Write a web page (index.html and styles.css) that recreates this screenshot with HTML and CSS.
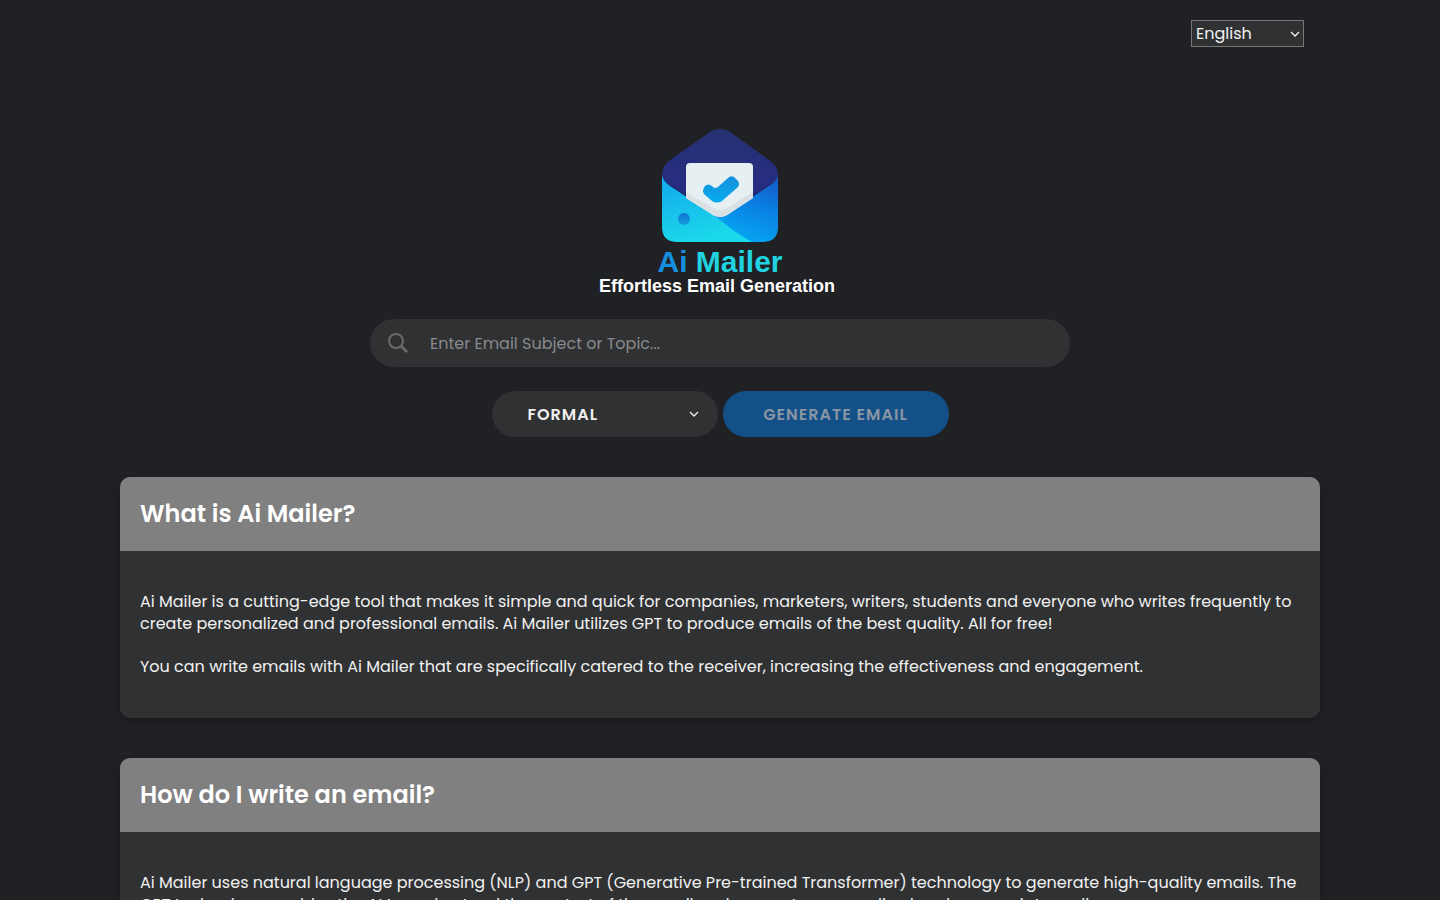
FILE: index.html
```
<!DOCTYPE html>
<html lang="en">
<head>
  <meta charset="UTF-8">
  <meta name="viewport" content="width=device-width, initial-scale=1.0">
  <title>Ai Mailer - Effortless Email Generation</title>
  <link rel="stylesheet" href="styles.css">
</head>
<body>
  <!-- Language -->
  <header class="top-bar">
    <select class="language-select" aria-label="Language">
      <option>English</option>
      <option>Español</option>
      <option>Français</option>
      <option>Deutsch</option>
    </select>
  </header>

  <main>
    <!-- Logo and form -->
    <section class="hero">
      <div class="logo">
        <svg class="logo-img" viewBox="0 0 160 130" aria-hidden="true">
          <defs>
            <linearGradient id="back" x1="0" y1="0" x2="0" y2="1">
              <stop offset="0" stop-color="#253272"/>
              <stop offset="1" stop-color="#28298a"/>
            </linearGradient>
            <linearGradient id="left" x1="0" y1="0" x2="0.3" y2="1">
              <stop offset="0" stop-color="#12a6ec"/>
              <stop offset="1" stop-color="#1bd8ea"/>
            </linearGradient>
            <linearGradient id="right" x1="1" y1="0" x2="0.6" y2="1">
              <stop offset="0" stop-color="#1555c4"/>
              <stop offset="0.5" stop-color="#0a80e2"/>
              <stop offset="1" stop-color="#06a5f2"/>
            </linearGradient>
            <linearGradient id="check" x1="0" y1="0" x2="0" y2="1">
              <stop offset="0" stop-color="#158fdd"/>
              <stop offset="1" stop-color="#08aced"/>
            </linearGradient>
            <linearGradient id="dot" x1="0" y1="0" x2="0" y2="1">
              <stop offset="0" stop-color="#1173ce"/>
              <stop offset="1" stop-color="#159fe0"/>
            </linearGradient>
          </defs>
          <path fill="url(#back)" d="M22 55Q22 46 30 40L70 12Q80 6 90 12L129 40Q138 46 138 55V76L86 97H74L22 76Z"/>
          <path fill="#1f2869" d="M22 55Q24 61 31 65L46 74V82L22 70ZM138 55Q136 61 129 65L113 74V82L138 70Z"/>
          <path fill="url(#right)" d="M138 55Q137 61 129 66L86 95L70 98L110 122H124Q138 121 138 107Z"/>
          <path fill="url(#left)" d="M22 55Q23 61 30 66L74 95Q95 113 112 122H36Q22 121 22 107Z"/>
          <path fill="#e6eff1" d="M46 47Q46 43 50 43H109Q113 43 113 47V78L87 95Q80 99 73 95L46 78Z"/>
          <path fill="#d9e1e5" d="M46 72L73 88Q80 92 87 88L113 72V78L87 95Q80 99 73 95L46 78Z"/>
          <path fill="url(#check)" d="M65 66Q68 63 72 66Q75 70 79 66L88 58Q91 55 94 57L98 61Q100 64 98 67L82 81Q77 84 72 81L65 75Q61 71 65 66Z"/>
          <circle cx="44" cy="99" r="6" fill="url(#dot)"/>
        </svg>
        <h1 class="logo-name"><span class="logo-ai">Ai</span> Mailer</h1>
        <p class="logo-tagline">Effortless Email Generation</p>
      </div>

      <form class="email-form">
        <div class="search-box">
          <svg class="search-icon" viewBox="0 0 20 20" aria-hidden="true">
            <circle cx="8" cy="8" r="7" fill="none" stroke="currentColor" stroke-width="2"/>
            <path d="M12.500 12.500L19 19" fill="none" stroke="currentColor" stroke-width="3"/>
          </svg>
          <input class="search-input" type="text" placeholder="Enter Email Subject or Topic..." aria-label="Email subject or topic">
        </div>
        <div class="form-actions">
          <select class="tone-select" aria-label="Tone">
            <option>FORMAL</option>
            <option>CASUAL</option>
            <option>FRIENDLY</option>
          </select>
          <button class="generate-btn" type="submit" disabled>GENERATE EMAIL</button>
        </div>
      </form>
    </section>

    <!-- Info cards -->
    <section class="cards">
      <article class="card">
        <h2 class="card-title">What is Ai Mailer?</h2>
        <div class="card-body">
          <p>Ai Mailer is a cutting-edge tool that makes it simple and quick for companies, marketers, writers, students and everyone who writes frequently to create personalized and professional emails. Ai Mailer utilizes GPT to produce emails of the best quality. All for free!</p>
          <p>You can write emails with Ai Mailer that are specifically catered to the receiver, increasing the effectiveness and engagement.</p>
        </div>
      </article>
      <article class="card">
        <h2 class="card-title">How do I write an email?</h2>
        <div class="card-body">
          <p>Ai Mailer uses natural language processing (NLP) and GPT (Generative Pre-trained Transformer) technology to generate high-quality emails. The GPT technology enables the AI to understand the context of the email and generate personalized and appropriate replies.</p>
        </div>
      </article>
    </section>
  </main>
</body>
</html>
```
FILE: styles.css
```
* {
  box-sizing: border-box;
}

body {
  margin: 0;
  background-color: #202124;
  color: #f1f1f1;
  font-family: "Poppins", "Inter", sans-serif;
  font-size: 16px;
  line-height: 1.4;
}

select,
input,
button {
  font-family: inherit;
  font-size: 16px;
}

select {
  appearance: none;
  background-color: #303133;
  background-image: url("data:image/svg+xml,%3Csvg xmlns='http://www.w3.org/2000/svg' width='10' height='6' viewBox='0 0 10 6'%3E%3Cpath d='M1 1l4 4 4-4' fill='none' stroke='%23f1f1f1' stroke-width='1.3'/%3E%3C/svg%3E");
  background-repeat: no-repeat;
  color: #f1f1f1;
}

/* Language */
.top-bar {
  display: flex;
  justify-content: flex-end;
  max-width: 1168px;
  margin: 0 auto;
  padding-top: 20px;
}

.language-select {
  width: 113px;
  height: 27px;
  padding: 0 4px;
  background-position: right 3px center;
  border: 1px solid #767676;
}

/* Logo */
.hero {
  display: flex;
  flex-direction: column;
  align-items: center;
  padding: 73px 20px 40px;
}

.logo {
  display: flex;
  flex-direction: column;
  align-items: center;
  margin-bottom: 20px;
  font-family: "Liberation Sans", Arial, sans-serif;
}

.logo-img {
  width: 160px;
  height: 130px;
}

.logo-name {
  margin: 0;
  font-size: 30px;
  line-height: 24px;
  color: #1fd3e0;
}

.logo-ai {
  color: #158fdd;
}

.logo-tagline {
  margin: 0;
  padding-right: 6px;
  font-size: 18px;
  font-weight: bold;
  color: #ffffff;
}

/* Form */
.email-form {
  width: 100%;
  max-width: 700px;
}

.search-box {
  display: flex;
  align-items: center;
  height: 48px;
  padding: 0 18px;
  gap: 22px;
  background-color: #303133;
  border-radius: 24px;
}

.search-icon {
  width: 20px;
  height: 20px;
  color: #68696b;
}

.search-input {
  flex: 1;
  padding: 0;
  background: none;
  border: none;
  outline: none;
  color: #f1f1f1;
}

.search-input::placeholder {
  color: #88898c;
}

.form-actions {
  display: flex;
  justify-content: center;
  gap: 5px;
  margin-top: 24px;
}

.tone-select,
.generate-btn {
  width: 226px;
  height: 46px;
  border: none;
  border-radius: 23px;
  font-weight: 600;
  letter-spacing: 1px;
}

.tone-select {
  padding: 0 36px;
  background-position: right 19px center;
}

.generate-btn {
  background-color: #135087;
  color: #8a96a3;
}

/* Cards */
.cards {
  max-width: 1200px;
  margin: 0 auto;
}

.card {
  margin-bottom: 40px;
  background-color: #303133;
  border-radius: 10px;
  box-shadow: 0 4px 8px rgba(0, 0, 0, 0.2);
  overflow: hidden;
}

.card-title {
  margin: 0;
  padding: 20px;
  background-color: #808080;
  color: #ffffff;
  font-size: 24px;
  font-weight: 600;
}

.card-body {
  padding: 20px;
}

.card-body p {
  margin: 20px 0;
}
```
